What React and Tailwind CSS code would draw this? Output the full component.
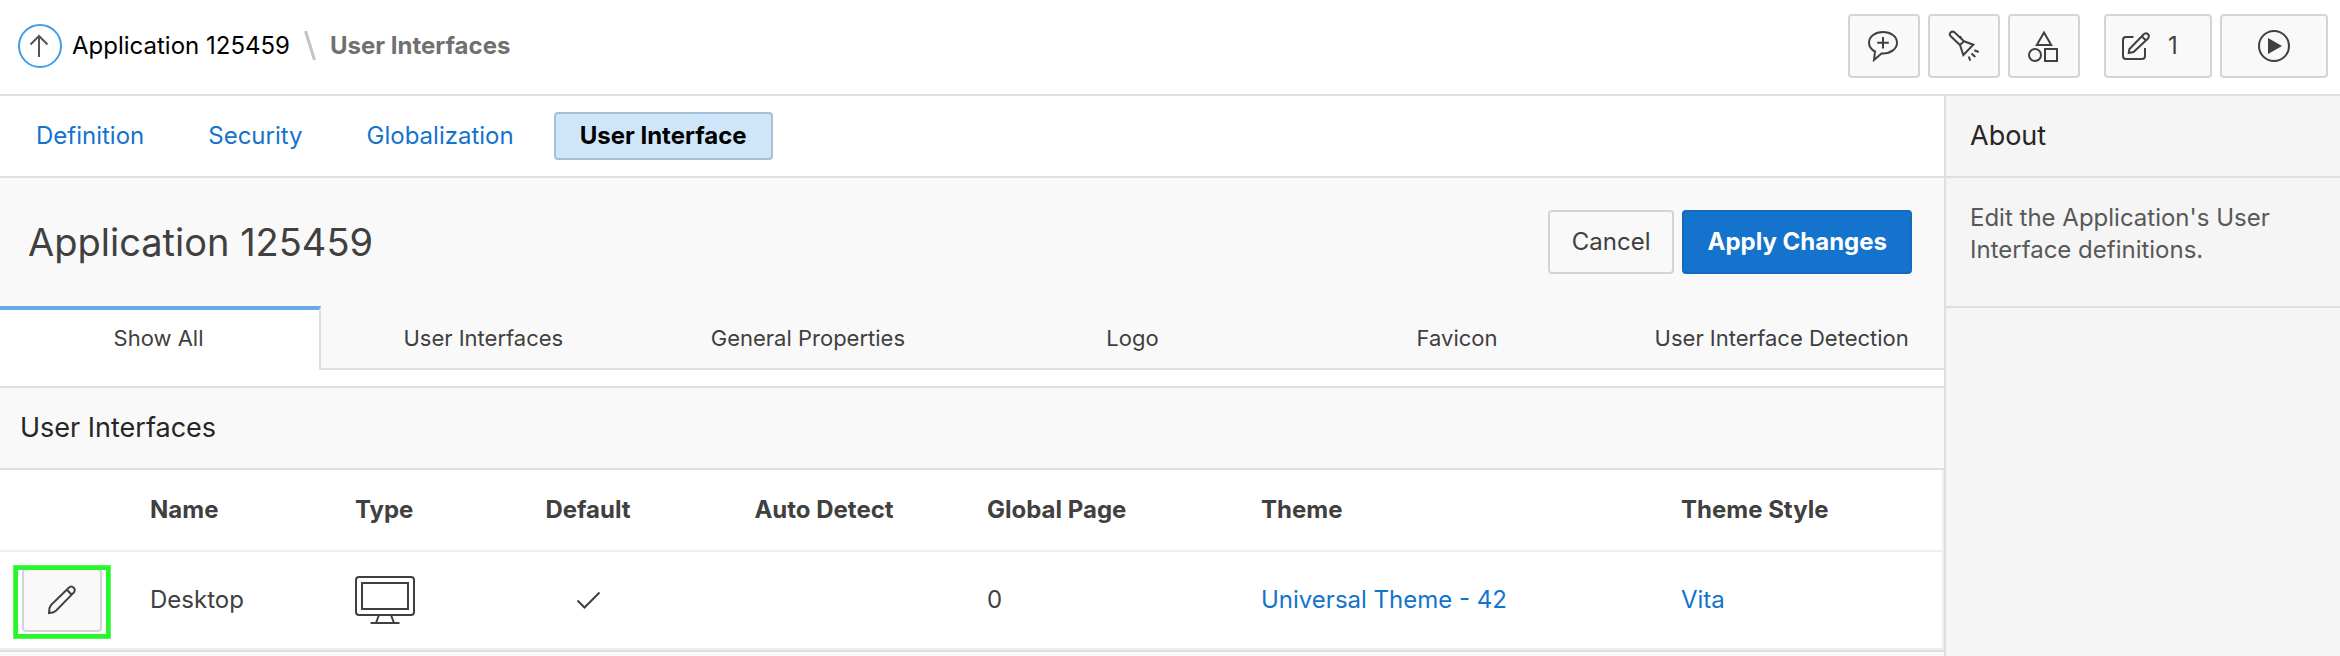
const tabs = ["User Interfaces", "General Properties", "Logo", "Favicon", "User Interface Detection"];

const iconButton =
  "flex h-16 items-center rounded border-2 border-[#d4d4d4] bg-[#f9f9f9] text-[#404040]";
const navLink = "flex h-12 items-center px-6 text-[#1473cc]";
const cell = "border-b-2 border-[#efefef]";
const stroke = { fill: "none", stroke: "currentColor", strokeWidth: 2 };

function PencilIcon() {
  return (
    <svg width="32" height="32" viewBox="0 0 32 32" {...stroke}>
      <path d="M3 29l.5-5L5 21 22.500 4c1.800-1.800 3.800-1.700 5.200-.3 1.500 1.500 1.500 3.500-.3 5.200L10.500 26.300l-3 2zM20.800 5.800l5 5" />
    </svg>
  );
}

export default function App() {
  return (
    <div className="flex min-h-screen flex-col bg-[#f5f5f5] font-['Inter',sans-serif] text-2xl leading-8 text-[#404040]">
      <header className="flex items-center justify-between border-b-2 border-[#dfdfdf] bg-white pt-3.5 pr-3 pb-4 pl-[18px]">
        <nav aria-label="Breadcrumb" className="flex items-center">
          <a href="#up" aria-label="Up" className="text-[#555555]">
            <svg width="44" height="44" viewBox="0 0 44 44" {...stroke}>
              <circle cx="22" cy="22" r="21" stroke="#449ce8" />
              <path d="M21 33V12M12.500 20.500L21 12l8.500 8.500" />
            </svg>
          </a>
          <a href="#app" className="ml-2.5 text-black">Application 125459</a>
          <svg className="mx-[13px]" width="14" height="30" viewBox="0 0 14 30" fill="none" stroke="#c4c4c4" strokeWidth="3">
            <path d="M2.500 0L11.500 29" />
          </svg>
          <span className="font-bold text-[#707070]">User Interfaces</span>
        </nav>
        <div className="flex gap-2">
          <button aria-label="Feedback" className={iconButton + " w-[72px] justify-center"}>
            <svg width="32" height="32" viewBox="0 0 32 32" {...stroke}>
              <path d="M7 21.500C3.300 19.500 1 16.200 1 12.700 1 6.600 7.300 2 15 2s14 4.600 14 10.700S22.700 23.500 15 23.500h-1.500L6 30z" />
              <path d="M15 7v11.500M9.200 12.800h11.600" />
            </svg>
          </button>
          <button aria-label="Search" className={iconButton + " w-[72px] justify-center"}>
            <svg width="32" height="32" viewBox="0 0 32 32" {...stroke}>
              <path d="M12 15L2.500 6C.5 3.500 3.500.5 6.500 2.200L16 11.300zM16 11.300l9.300 3.400L15.300 25 12 15M12 6.200l2 3M26.300 20.300l4.400 1.700M23.500 23.500l3.800 3.500M20.700 26.500l1.600 4.200" />
            </svg>
          </button>
          <button aria-label="Shared Components" className={iconButton + " w-[72px] justify-center"}>
            <svg width="32" height="32" viewBox="0 0 32 32" {...stroke}>
              <path d="M16 2.500L23.200 15H8.800zM17 19h12v12H17z" />
              <circle cx="7" cy="25" r="6" />
            </svg>
          </button>
          <button aria-label="Edit Page 1" className={iconButton + " ml-4 w-[108px] gap-4 pl-3.5"}>
            <svg width="32" height="32" viewBox="0 0 32 32" {...stroke}>
              <path d="M13.500 7H6Q3 7 3 10v16q0 3 3 3h16q3 0 3-3v-8" />
              <path d="M8.800 23l.5-3.800L23.500 4.500c1.500-1.500 3.300-1.500 4.500-.3s1.300 3-.2 4.500L13.500 22zM21.500 6l4.500 4.500" />
            </svg>
            <span>1</span>
          </button>
          <button aria-label="Run" className={iconButton + " w-[108px] justify-center"}>
            <svg width="32" height="32" viewBox="0 0 32 32" {...stroke}>
              <circle cx="16" cy="16" r="15" />
              <path d="M10 8v16l14-8z" fill="currentColor" stroke="none" />
            </svg>
          </button>
        </div>
      </header>

      <div className="flex flex-1">
        <main className="flex min-w-0 flex-1 flex-col bg-[#f9f9f9]">
          <nav aria-label="Sections" className="flex gap-4 border-b-2 border-[#dfdfdf] bg-white px-3 py-4">
            <a href="#definition" className={navLink}>Definition</a>
            <a href="#security" className={navLink}>Security</a>
            <a href="#globalization" className={navLink}>Globalization</a>
            <a
              href="#ui"
              aria-current="page"
              className="flex h-12 items-center rounded border-2 border-[#a9bfd2] bg-[#cfe6fa] px-6 font-bold text-black"
            >
              User Interface
            </a>
          </nav>

          <div className="flex h-32 items-center justify-between pr-8 pl-7">
            <h1 className="text-[38px]">Application 125459</h1>
            <div className="flex gap-2">
              <button className="h-16 rounded border-2 border-[#d4d4d4] px-[22px]">Cancel</button>
              <button className="h-16 rounded border-2 border-[#136bbe] bg-[#1473cc] px-[23px] font-bold text-white">
                Apply Changes
              </button>
            </div>
          </div>

          <div role="tablist" className="flex h-16 text-[22px]">
            <button role="tab" aria-selected="true" className="w-[321px] border-t-4 border-r-2 border-t-[#6aaae4] border-r-[#dfdfdf] bg-white pr-0.5 pb-1">
              Show All
            </button>
            {tabs.map((t) => (
              <button key={t} role="tab" aria-selected="false" className="flex-1 basis-0 border-b-2 border-[#dfdfdf] pt-0.5 whitespace-nowrap">
                {t}
              </button>
            ))}
          </div>
          <div className="h-4 bg-white" />

          <section>
            <h2 className="flex h-[84px] items-center border-y-2 border-[#dfdfdf] pl-5 text-[27px] text-[#262626]">
              User Interfaces
            </h2>
            <div className="border-b-2 border-[#dfdfdf] bg-white">
              <table className="w-full table-fixed border-separate border-spacing-0 border-r-2 border-[#efefef] text-left">
                <thead>
                  <tr className="h-[82px]">
                    <th aria-label="Edit" className={cell + " w-[126px]"} />
                    <th className={cell + " w-[205px] px-6"}>Name</th>
                    <th className={cell + " w-[160px] px-6"}>Type</th>
                    <th className={cell + " w-[194px] px-6 text-center"}>Default</th>
                    <th className={cell + " w-[278px] px-6 text-center"}>Auto Detect</th>
                    <th className={cell + " w-[274px] px-6"}>Global Page</th>
                    <th className={cell + " w-[420px] px-6"}>Theme</th>
                    <th className={cell + " px-6"}>Theme Style</th>
                  </tr>
                </thead>
                <tbody>
                  <tr className="h-[98px]">
                    <td className={cell + " pl-[22px]"}>
                      <div className="relative w-20">
                        <button aria-label="Edit Desktop" className={iconButton + " w-20 justify-center"}>
                          <PencilIcon />
                        </button>
                        <div className="pointer-events-none absolute -inset-x-2 -top-0.5 -bottom-1.5 border-4 border-[#28f62c] outline outline-[#5af75d]" />
                      </div>
                    </td>
                    <td className={cell + " px-6"}>Desktop</td>
                    <td className={cell + " px-6"}>
                      <svg role="img" aria-label="Desktop computer" width="60" height="48" viewBox="0 0 60 48" {...stroke}>
                        <rect x="1" y="1" width="58" height="38" rx="3" />
                        <rect x="7" y="7" width="46" height="26" />
                        <path d="M24 39l-3 8M36 39l3 8M15.500 47h29" />
                      </svg>
                    </td>
                    <td className={cell + " px-6"}>
                      <svg className="mx-auto" role="img" aria-label="Yes" width="32" height="32" viewBox="0 0 32 32" {...stroke}>
                        <path d="M5.500 16.500l7 7L27.500 8.500" />
                      </svg>
                    </td>
                    <td className={cell} />
                    <td className={cell + " px-6"}>0</td>
                    <td className={cell + " px-6"}><a href="#theme" className="text-[#1473cc]">Universal Theme - 42</a></td>
                    <td className={cell + " px-6"}><a href="#vita" className="text-[#1473cc]">Vita</a></td>
                  </tr>
                </tbody>
              </table>
            </div>
          </section>
        </main>

        <aside className="w-[396px] shrink-0 border-l-2 border-[#dfdfdf]">
          <h2 className="flex h-[82px] items-center border-b-2 border-[#dfdfdf] px-6 text-[27px] text-[#262626]">About</h2>
          <p className="h-[130px] border-b-2 border-[#dfdfdf] px-6 pt-6 text-[#585858]">
            Edit the Application's User Interface definitions.
          </p>
        </aside>
      </div>
    </div>
  );
}
